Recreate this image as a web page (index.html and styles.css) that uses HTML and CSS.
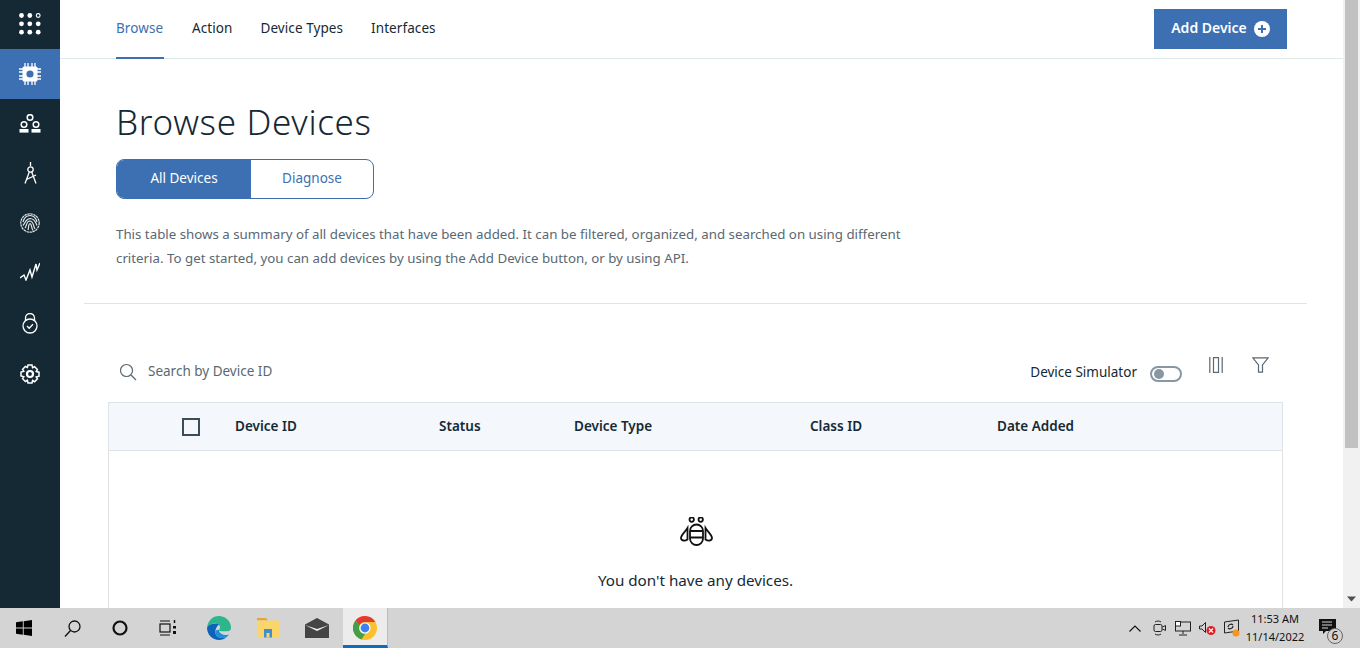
FILE: index.html
```html
<!DOCTYPE html>
<html lang="en">
<head>
<meta charset="utf-8">
<title>Browse Devices</title>
<link rel="stylesheet" href="styles.css">
</head>
<body>
<div class="screen">
  <div class="window">
    <nav class="rail">
      <div class="rail-item rail-top">
        <svg width="22" height="22" viewBox="0 0 22 22" fill="#fff"><circle cx="2.500" cy="2.500" r="2.400"/><circle cx="10.800" cy="2.500" r="2.400"/><circle cx="19.200" cy="2.500" r="1.900" fill="none" stroke="#fff" stroke-width="1.100"/><circle cx="2.500" cy="10.800" r="2.400"/><circle cx="10.800" cy="10.800" r="2.400"/><circle cx="19.200" cy="10.800" r="2.400"/><circle cx="2.500" cy="19.200" r="2.400"/><circle cx="10.800" cy="19.200" r="2.400"/><circle cx="19.200" cy="19.200" r="2.400"/></svg>
      </div>
      <div class="rail-item rail-active">
        <svg width="22" height="22" viewBox="0 0 22 22"><path d="M6 0v22M9 0v22M13 0v22M16 0v22M0 6h22M0 9h22M0 13h22M0 16h22" stroke="#fff" stroke-width="1.300" fill="none"/><rect x="3.500" y="3.500" width="15" height="15" rx="1.500" fill="#fff"/><circle cx="11" cy="11" r="3.600" fill="#3d70b2"/></svg>
      </div>
      <div class="rail-item">
        <svg width="22" height="20" viewBox="0 0 22 20" fill="none" stroke="#fff" stroke-width="1.500"><circle cx="11" cy="3.500" r="2.800"/><circle cx="5" cy="10.500" r="2.800"/><circle cx="17" cy="10.500" r="2.800"/><rect x="0.500" y="15" width="9" height="3.600" fill="#fff" stroke="none"/><rect x="12.500" y="15" width="9" height="3.600" fill="#fff" stroke="none"/></svg>
      </div>
      <div class="rail-item rail-up1">
        <svg width="13" height="22" viewBox="0 0 13 22" fill="none" stroke="#fff" stroke-width="1.300"><path d="M6.500 0v4"/><circle cx="6.500" cy="7.500" r="2.700"/><path d="M5.300 10 1 21.500M7.700 10 12 21.500M2.500 17.500l9.500-4.500"/></svg>
      </div>
      <div class="rail-item rail-up1">
        <svg width="20" height="20" viewBox="0 0 20 20" fill="none" stroke="#e4e7e9" stroke-width="1.200"><circle cx="10" cy="10" r="9.200" stroke-dasharray="2.500 .6"/><path d="M3 9c1-4 4-6.500 7-6.500s6 2.500 7 6.500M2.800 12.500c2-1 2-6 7.200-7 5 0 6 5 7 7M5 15c2-2 1-7 5-7 4 .5 3 5 5 8M8 17c1-3 0-6 2-6.500 2 .5 1 4 3 7"/></svg>
      </div>
      <div class="rail-item rail-up5">
        <svg width="20" height="19" viewBox="0 0 20 19" fill="none" stroke="#fff" stroke-width="1.400"><path d="M0 16l4-3 2 5 4-10 2 7 4-13 1 6 3-7"/></svg>
      </div>
      <div class="rail-item rail-up2">
        <svg width="16" height="21" viewBox="0 0 16 21" fill="none" stroke="#fff" stroke-width="1.300"><path d="M3.500 8V5a4.500 4.500 0 0 1 9 0v3"/><circle cx="8" cy="13" r="7"/><path d="M5 13l2.200 2.200L11 11.300"/></svg>
      </div>
      <div class="rail-item">
        <svg width="20" height="20" viewBox="0 0 20 20" fill="none" stroke="#fff" stroke-width="1.500"><path d="M8 1h4l.6 2.600 2-.9 2.800 2.800-1.200 2 2.800.7v4l-2.800.7 1.200 2-2.800 2.800-2-1.200L12 19H8l-.6-2.700-2 1.200-2.800-2.800 1.200-2L1 12V8l2.800-.7-1.200-2 2.800-2.800 2 .9z"/><circle cx="10" cy="10" r="3" stroke-width="2.200"/></svg>
      </div>
    </nav>

    <main class="content">
      <header class="topbar">
        <div class="tabs">
          <a class="tab tab-active">Browse</a>
          <a class="tab">Action</a>
          <a class="tab">Device Types</a>
          <a class="tab">Interfaces</a>
        </div>
        <button class="add-btn"><span class="add-label">Add Device</span>
          <svg width="16" height="16" viewBox="0 0 16 16"><circle cx="8" cy="8" r="8" fill="#fff"/><path d="M8 4v8M4 8h8" stroke="#3d70b2" stroke-width="2"/></svg>
        </button>
      </header>

      <section class="intro">
        <h1 class="title">Browse Devices</h1>
        <div class="switcher">
          <span class="switch-item switch-on">All Devices</span>
          <span class="switch-item">Diagnose</span>
        </div>
        <p class="desc">This table shows a summary of all devices that have been added. It can be filtered, organized, and searched on using different criteria. To get started, you can add devices by using the Add Device button, or by using API.</p>
      </section>

      <hr class="rule">

      <section class="table-wrap">
        <div class="toolbar">
          <div class="search">
            <svg width="18" height="18" viewBox="0 0 18 18" fill="none" stroke="#5a6872" stroke-width="1.200"><circle cx="7.500" cy="7.500" r="6"/><path d="M12 12l5 5"/></svg>
            <span>Search by Device ID</span>
          </div>
          <div class="tools">
            <span class="sim-label">Device Simulator</span>
            <span class="toggle"><span class="knob"></span></span>
            <svg class="tool-columns" width="14" height="16" viewBox="0 0 14 16" fill="none" stroke="#5a6872" stroke-width="1.200"><path d="M.8 0v16M13.200 0v16"/><rect x="4.500" y=".6" width="5" height="14.800"/></svg>
            <svg class="tool-filter" width="17" height="16" viewBox="0 0 17 16" fill="none" stroke="#5a6872" stroke-width="1.200"><path d="M.8.800h15.400L10.500 8v7.200h-4V8z"/></svg>
          </div>
        </div>
        <div class="table">
          <div class="thead">
            <span class="check"></span>
            <span class="col col-id">Device ID</span>
            <span class="col col-status">Status</span>
            <span class="col col-type">Device Type</span>
            <span class="col col-class">Class ID</span>
            <span class="col">Date Added</span>
          </div>
          <div class="empty">
            <svg width="33" height="29" viewBox="0 0 33 29" fill="none" stroke="#111" stroke-width="1.800"><circle cx="11.700" cy="2.600" r="2.200"/><circle cx="20.700" cy="2.600" r="2.200"/><rect x="10" y="7.500" width="13" height="20.500" rx="6.500"/><path d="M10 14h13M10 20.500h13"/><path d="M7.500 11C5 15 1 18 1 21c0 3 4 3.200 6.500 1.500z"/><path d="M25.500 11C28 15 32 18 32 21c0 3-4 3.200-6.500 1.500z"/></svg>
            <p class="empty-text">You don't have any devices.</p>
          </div>
        </div>
      </section>
    </main>

    <div class="scrollbar">
      <div class="thumb"></div>
      <svg class="arrow" width="9" height="6" viewBox="0 0 9 6"><path d="M0 .5h9L4.500 5.500z" fill="#505050"/></svg>
    </div>
  </div>

  <footer class="taskbar">
    <div class="task-left">
      <span class="task-slot"><svg width="16" height="16" viewBox="0 0 16 16" fill="#000"><path d="M0 2.300 6.800 1.300v6.300H0zM7.700 1.200 16 0v7.600H7.700zM0 8.400h6.800v6.300L0 13.700zM7.700 8.400H16V16l-8.300-1.200z"/></svg></span>
      <span class="task-slot"><svg width="17" height="17" viewBox="0 0 17 17" fill="none" stroke="#111" stroke-width="1.300"><circle cx="10.500" cy="6.500" r="5.500"/><path d="M6.500 10.500l-5.500 6"/></svg></span>
      <span class="task-slot"><svg width="16" height="16" viewBox="0 0 16 16" fill="none" stroke="#111" stroke-width="2.200"><circle cx="8" cy="8" r="6.500"/></svg></span>
      <span class="task-slot"><svg width="18" height="16" viewBox="0 0 18 16" fill="none" stroke="#111" stroke-width="1.200"><path d="M1 1h10M1 15h10"/><rect x="1" y="4" width="10" height="8"/><path d="M15.500 0v3" stroke-width="1.500"/><rect x="14" y="6" width="3" height="2.500" fill="#111" stroke="none"/><rect x="14" y="11" width="3" height="3" fill="#111" stroke="none"/></svg></span>
      <span class="task-slot task-app task-edge">
        <svg width="24" height="24" viewBox="0 0 26 26"><path d="M13 0a13 13 0 0 1 13 13c0 2-1 3.500-4 3.500h-7c-1 0-2-.5-2-1.500 3-3 0-7-4-7-4 0-7 2-9 5 1-8 6-13 13-13z" fill="#2db58b"/><path d="M0 13c0 7 6 13 13 13 3 0 6-1 8-3-6 2-12 0-12-6 0-3 2-6 4-8-1-.5-3-.5-4-.5-5 0-8 2-9 4.500z" fill="#0c63b8"/><path d="M9 17c0 6 6 8 12 6 1-1 2-2 3-3-4 1-8 1-10-2-1-1-1-2-1-3-2 0-4 1-4 2z" fill="#1e8ed8"/></svg>
      </span>
      <span class="task-slot task-app">
        <svg width="22" height="20" viewBox="0 0 22 20"><path d="M0 0h9l2 2.500H0z" fill="#e8a33c"/><rect y="2.500" width="22" height="17" fill="#fad66a"/><rect x="7" y="11" width="8" height="8.500" fill="#3f8fd0"/><rect x="9.500" y="15" width="3" height="4.500" fill="#fad66a"/></svg>
      </span>
      <span class="task-slot task-app task-mail">
        <svg width="24" height="20" viewBox="0 0 24 20"><path d="M0 6.500 12 0l12 6.500V20H0z" fill="#444"/><path d="M0 7l12 6 12-6-12 4z" fill="#eee"/></svg>
      </span>
      <span class="task-slot task-chrome">
        <svg width="24" height="24" viewBox="0 0 24 24"><circle cx="12" cy="12" r="12" fill="#fbc02d"/><path d="M12 0a12 12 0 0 1 10.400 6H12a6 6 0 0 0-5.400 3.400L2.500 4.500A12 12 0 0 1 12 0z" fill="#e53935"/><path d="M2.500 4.500l4.100 4.900A6 6 0 0 0 12 18l-3.500 5.500A12 12 0 0 1 2.500 4.500z" fill="#43a047"/><circle cx="12" cy="12" r="5.600" fill="#fff"/><circle cx="12" cy="12" r="4.400" fill="#3b82f0"/></svg>
      </span>
    </div>
    <div class="task-right">
      <span class="tray-slot"><svg width="12" height="7" viewBox="0 0 12 7" fill="none" stroke="#111" stroke-width="1.100"><path d="M.5 6.500 6 1l5.500 5.500"/></svg></span>
      <span class="tray-slot"><svg width="13" height="16" viewBox="0 0 13 16" fill="none" stroke="#222"><path d="M2 2c2-1.300 4-1.300 6 0M2 14c2 1.300 4 1.300 6 0"/><rect x="1" y="4.500" width="8" height="7" rx="1.500"/><path d="M9.500 7l3-1.500v5L9.500 9"/></svg></span>
      <span class="tray-slot"><svg width="16" height="15" viewBox="0 0 16 15" fill="none" stroke="#222"><rect x=".5" y="1" width="15" height="9"/><path d="M8 10v3M4 14h8"/><rect x=".5" y=".5" width="5" height="4.500" fill="#fff"/></svg></span>
      <span class="tray-slot"><svg width="17" height="14" viewBox="0 0 17 14"><path d="M.5 5h2.500L6.500 1.500v10L3 8H.5z" fill="none" stroke="#222"/><circle cx="12" cy="9.500" r="4.500" fill="#e21b23"/><path d="M10 7.500l4 4M14 7.500l-4 4" stroke="#fff" stroke-width="1.200"/></svg></span>
      <span class="tray-slot"><svg width="17" height="18" viewBox="0 0 17 18" fill="none" stroke="#222"><path d="M1.500 3 15.500 1v11L1.500 14z"/><path d="M5 8a3 3 0 0 1 5-2M10 7a3 3 0 0 1-5 2" stroke-width="1.200"/><circle cx="13" cy="14" r="3.500" fill="#f7941d" stroke="none"/></svg></span>
      <div class="clock"><span>11:53 AM</span><span>11/14/2022</span></div>
      <span class="notify">
        <svg width="17" height="15" viewBox="0 0 17 15"><path d="M0 0h17v12H7l-3 3v-3H0z" fill="#111"/><path d="M3 3h10M3 6h10M3 9h6" stroke="#d4d4d4"/></svg>
        <span class="notify-count">6</span>
      </span>
    </div>
  </footer>
</div>
</body>
</html>
```
FILE: styles.css
```css
* { box-sizing: border-box; }
html, body { margin: 0; height: 100%; overflow: hidden; }
body { font-family: "Noto Sans", "Liberation Sans", sans-serif; color: #152935; background: #fff; }
.screen { width: 1360px; height: 648px; display: flex; flex-direction: column; }
.window { height: 608px; display: flex; overflow: hidden; }

.rail { width: 60px; flex: none; background: #152935; display: flex; flex-direction: column; }
.rail-item { height: 50px; display: flex; align-items: center; justify-content: center; flex: none; }
.rail-top { height: 49px; padding-bottom: 1px; }
.rail-active { background: #3d70b2; }
.rail-up1 { padding-bottom: 2px; }
.rail-up2 { padding-bottom: 2px; }
.rail-up5 { padding-bottom: 5px; }

.content { flex: 1; min-width: 0; overflow: hidden; }
.topbar { height: 59px; border-bottom: 1px solid #dfeaea; display: flex; justify-content: space-between; padding: 0 56px; }
.tabs { display: flex; gap: 28px; }
.tab { height: 59px; line-height: 57px; font-size: 13.5px; letter-spacing: .08px; color: #152935; }
.tab-active { min-width: 48px; color: #3d70b2; border-bottom: 2px solid #3d70b2; }
.add-btn { margin-top: 9px; width: 133px; height: 40px; background: #3d70b2; color: #fff; border: 0; padding: 0; font: 600 14px "Noto Sans", sans-serif; display: flex; align-items: center; justify-content: center; gap: 7px; }
.add-label { position: relative; bottom: 1px; margin-bottom: 2px; }

.intro { padding: 40px 0 0 56px; }
.title { margin: 0; font-size: 35px; line-height: 46px; font-weight: 300; letter-spacing: .67px; }
.switcher { margin-top: 14px; width: 258px; height: 40px; display: flex; border: 1px solid #3d70b2; border-radius: 8px; overflow: hidden; font-size: 13.5px; color: #3d70b2; }
.switch-item { display: flex; align-items: center; justify-content: center; flex: 1; padding-bottom: 2px; }
.switch-on { flex: none; width: 134px; background: #3d70b2; color: #fff; }
.desc { margin: 23px 0 0; width: 800px; font-size: 13.3px; line-height: 24px; color: #5a6872; }

.rule { margin: 33px 36px 0 24px; border: 0; border-top: 1px solid #dfe3e6; }

.table-wrap { padding: 0 60px 0 48px; }
.toolbar { height: 98px; display: flex; justify-content: space-between; }
.search { display: flex; align-items: flex-start; gap: 11px; height: 24px; margin-top: 56px; padding-left: 11px; font-size: 13.5px; line-height: 22px; color: #5a6872; }
.search svg { margin-top: 3px; }
.tools { display: flex; align-items: flex-start; margin-right: 14px; }
.sim-label { margin-top: 59px; font-size: 13.5px; }
.toggle { margin: 62px 0 0 13px; width: 32px; height: 16px; border: 2px solid #8897a2; border-radius: 8px; display: flex; align-items: center; padding-left: 2px; }
.knob { width: 10px; height: 10px; border-radius: 50%; background: #8897a2; }
.tool-columns { margin: 53px 0 0 27px; }
.tool-filter { margin: 53px 0 0 29px; }

.table { border: 1px solid #dfe3e6; height: 300px; }
.thead { height: 48px; background: #f4f7fb; border-bottom: 1px solid #dfe3e6; display: flex; align-items: center; font-size: 13.5px; font-weight: 600; padding-left: 73px; }
.col { padding-bottom: 2px; }
.check { width: 18px; height: 18px; border: 2px solid #3d4d58; flex: none; margin-right: 35px; }
.col-id { width: 204px; }
.col-status { width: 135px; }
.col-type { width: 236px; }
.col-class { width: 187px; }
.empty { display: flex; flex-direction: column; align-items: center; padding-top: 66px; }
.empty svg { display: block; margin-left: 2px; }
.empty-text { margin: 23px 0 0; font-size: 15.200px; line-height: 22px; }

.scrollbar { width: 17px; flex: none; background: #f1f1f1; padding-left: 2px; position: relative; }
.thumb { width: 13px; height: 448px; background: #c1c1c1; }
.arrow { position: absolute; left: 4px; bottom: 6px; }

.taskbar { height: 40px; flex: none; background: #d4d4d4; display: flex; justify-content: space-between; }
.task-left { display: flex; }
.task-slot { width: 48px; height: 40px; display: flex; align-items: center; justify-content: center; }
.task-app { width: 49px; }
.task-edge { margin-left: 2px; }
.task-mail { width: 50px; }
.task-chrome { width: 45px; margin-left: 1px; background: #ececec; border-bottom: 3px solid #0f6cbd; border-right: 1px solid #bbb; padding-top: 3px; }
.task-right { display: flex; align-items: center; padding-right: 24px; }
.tray-slot { width: 24px; height: 40px; display: flex; align-items: center; justify-content: center; }
.clock { display: flex; flex-direction: column; align-items: center; font: 11px/18px "Noto Sans", sans-serif; width: 58px; margin-left: 3px; color: #111; }
.notify { position: relative; display: flex; width: 17px; height: 22px; margin: 4px 0 0 15px; }
.notify-count { position: absolute; right: -7px; bottom: -3px; width: 16px; height: 16px; border: 1px solid #666; border-radius: 50%; background: #d4d4d4; font-size: 12px; line-height: 14px; text-align: center; color: #111; }
```
